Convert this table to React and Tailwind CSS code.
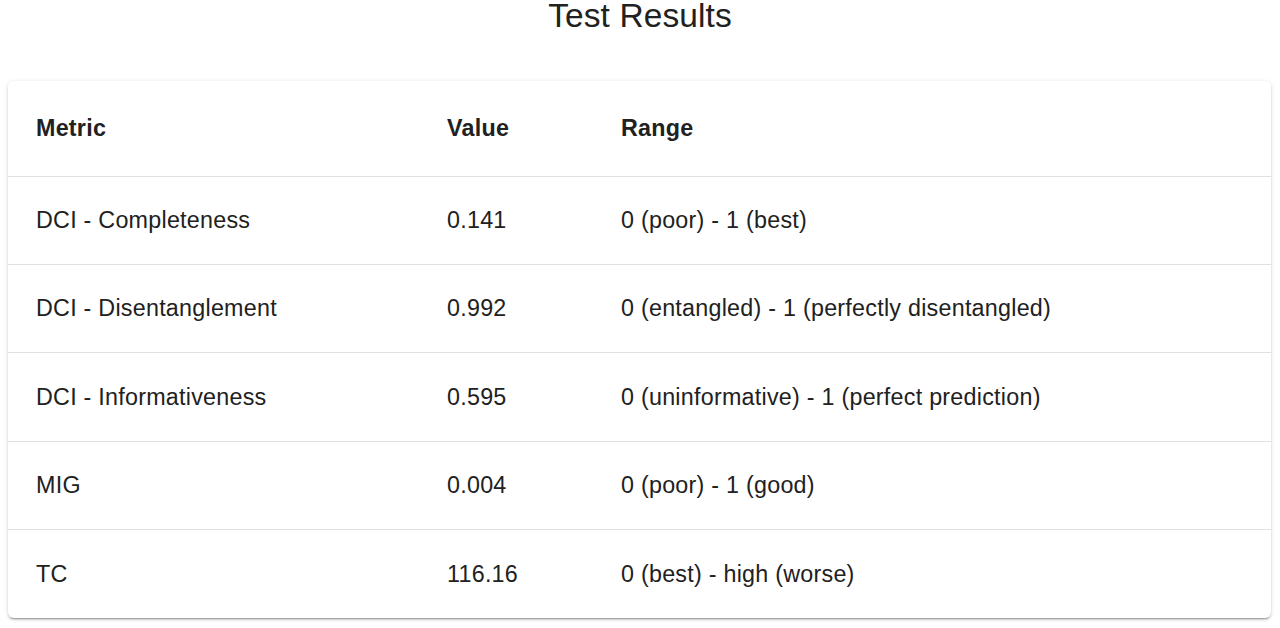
import React from "react";

const rows = [
  { metric: "DCI - Completeness", value: "0.141", range: "0 (poor) - 1 (best)" },
  { metric: "DCI - Disentanglement", value: "0.992", range: "0 (entangled) - 1 (perfectly disentangled)" },
  { metric: "DCI - Informativeness", value: "0.595", range: "0 (uninformative) - 1 (perfect prediction)" },
  { metric: "MIG", value: "0.004", range: "0 (poor) - 1 (good)" },
  { metric: "TC", value: "116.16", range: "0 (best) - high (worse)" },
];

const App = () => {
  return (
    <div className="min-h-screen bg-white text-[#212121] font-['Liberation_Sans',Arial,sans-serif]">
      {/* Title */}
      <h1 className="text-center text-[33.5px] tracking-[0.1px] leading-[31px] font-normal mb-[50px]">
        Test Results
      </h1>

      {/* Results table */}
      <div className="ml-[8px] mr-[9px] bg-white rounded-[6px] overflow-hidden shadow-[0px_3px_1px_-2px_rgba(0,0,0,0.2),0px_2px_2px_0px_rgba(0,0,0,0.14),0px_1px_5px_0px_rgba(0,0,0,0.12)]">
        <table className="w-full table-fixed border-collapse text-[23.3px] tracking-[0.25px]">
          <colgroup>
            <col className="w-[411px]" />
            <col className="w-[174px]" />
            <col />
          </colgroup>
          <thead>
            <tr className="h-[95px] border-b border-[#e0e0e0]">
              <th className="text-left font-bold pl-[28px]">Metric</th>
              <th className="text-left font-bold pl-[28px]">Value</th>
              <th className="text-left font-bold pl-[28px]">Range</th>
            </tr>
          </thead>
          <tbody>
            {rows.map((r, idx) => (
              <tr
                key={r.metric}
                className={`h-[88.4px] ${
                  idx < rows.length - 1 ? "border-b border-[#e0e0e0]" : ""
                }`}
              >
                <td className="pl-[28px]">{r.metric}</td>
                <td className="pl-[28px]">{r.value}</td>
                <td className="pl-[28px]">{r.range}</td>
              </tr>
            ))}
          </tbody>
        </table>
      </div>
    </div>
  );
};

export default App;
